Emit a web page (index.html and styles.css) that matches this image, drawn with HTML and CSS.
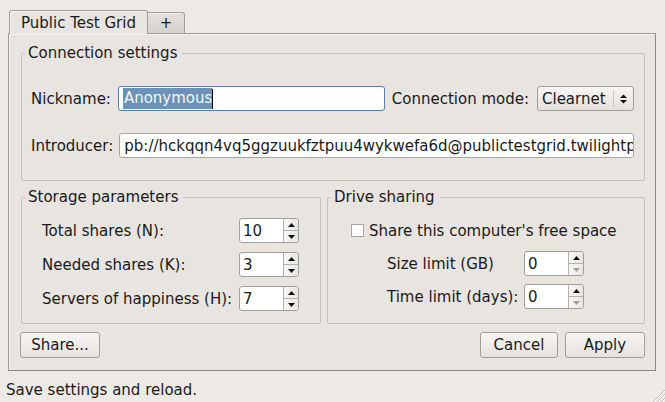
FILE: index.html
```html
<!DOCTYPE html>
<html>
<head>
<meta charset="utf-8">
<link rel="stylesheet" href="styles.css">
</head>
<body>
<div class="window">
  <div class="tabs">
    <div class="tab active">Public Test Grid</div>
    <div class="tab plus">+</div>
  </div>
  <div class="pane">
    <fieldset class="group conn">
      <legend>Connection settings</legend>
      <div class="row">
        <span class="lbl">Nickname:</span>
        <div class="input nick"><span class="sel">Anonymous</span><span class="caret"></span></div>
        <span class="lbl">Connection mode:</span>
        <div class="combo">
          <span class="combo-text">Clearnet</span>
          <span class="combo-btn"><svg width="9" height="12" viewBox="0 0 9 12"><polygon points="1,5 8,5 4.5,1.5" fill="#111"/><polygon points="1,7 8,7 4.5,10.5" fill="#111"/></svg></span>
        </div>
      </div>
      <div class="row">
        <span class="lbl">Introducer:</span>
        <div class="input intro"><span class="intro-text">pb://hckqqn4vq5ggzuukfztpuu4wykwefa6d@publictestgrid.twilightparadox.com:50213/introducer</span></div>
      </div>
    </fieldset>
    <div class="groups">
      <fieldset class="group storage">
        <legend>Storage parameters</legend>
        <div class="storage-grid">
          <span class="lbl">Total shares (N):</span>
          <div class="spin"><span class="spin-val">10</span><span class="spin-btns"><span><svg width="7" height="4" viewBox="0 0 7 4"><polygon points="0,4 7,4 3.5,0" fill="#111"/></svg></span><span><svg width="7" height="4" viewBox="0 0 7 4"><polygon points="0,0 7,0 3.5,4" fill="#111"/></svg></span></span></div>
          <span class="lbl">Needed shares (K):</span>
          <div class="spin"><span class="spin-val">3</span><span class="spin-btns"><span><svg width="7" height="4" viewBox="0 0 7 4"><polygon points="0,4 7,4 3.5,0" fill="#111"/></svg></span><span><svg width="7" height="4" viewBox="0 0 7 4"><polygon points="0,0 7,0 3.5,4" fill="#111"/></svg></span></span></div>
          <span class="lbl">Servers of happiness (H):</span>
          <div class="spin"><span class="spin-val">7</span><span class="spin-btns"><span><svg width="7" height="4" viewBox="0 0 7 4"><polygon points="0,4 7,4 3.5,0" fill="#111"/></svg></span><span><svg width="7" height="4" viewBox="0 0 7 4"><polygon points="0,0 7,0 3.5,4" fill="#111"/></svg></span></span></div>
        </div>
      </fieldset>
      <fieldset class="group drive">
        <legend>Drive sharing</legend>
        <div class="check-row"><span class="checkbox"></span><span class="lbl">Share this computer's free space</span></div>
        <div class="limits">
          <span class="lbl">Size limit (GB)</span>
          <div class="spin"><span class="spin-val">0</span><span class="spin-btns"><span><svg width="7" height="4" viewBox="0 0 7 4"><polygon points="0,4 7,4 3.5,0" fill="#111"/></svg></span><span><svg width="7" height="4" viewBox="0 0 7 4"><polygon points="0,0 7,0 3.5,4" fill="#a09c97"/></svg></span></span></div>
          <span class="lbl">Time limit (days):</span>
          <div class="spin"><span class="spin-val">0</span><span class="spin-btns"><span><svg width="7" height="4" viewBox="0 0 7 4"><polygon points="0,4 7,4 3.5,0" fill="#111"/></svg></span><span><svg width="7" height="4" viewBox="0 0 7 4"><polygon points="0,0 7,0 3.5,4" fill="#a09c97"/></svg></span></span></div>
        </div>
      </fieldset>
    </div>
    <div class="buttons">
      <div class="btn share">Share...</div>
      <div class="spacer"></div>
      <div class="btn cancel">Cancel</div>
      <div class="btn apply">Apply</div>
    </div>
  </div>
  <div class="status">
    <span class="status-text">Save settings and reload.</span>
    <svg class="grip" width="14" height="14" viewBox="0 0 14 14"><g stroke="#c2beb9" stroke-width="1"><line x1="14" y1="2" x2="2" y2="14"/><line x1="14" y1="6" x2="6" y2="14"/><line x1="14" y1="10" x2="10" y2="14"/></g><g stroke="#ffffff" stroke-width="1"><line x1="14" y1="3" x2="3" y2="14"/><line x1="14" y1="7" x2="7" y2="14"/><line x1="14" y1="11" x2="11" y2="14"/></g></svg>
  </div>
</div>
</body>
</html>
```
FILE: styles.css
```css
* { box-sizing: border-box; }
html, body { margin: 0; padding: 0; }
body {
  width: 665px;
  height: 402px;
  overflow: hidden;
  background: #edeae6;
  font-family: "DejaVu Sans", sans-serif;
  font-size: 15px;
  color: #1a1a1a;
}
.window {
  display: flex;
  flex-direction: column;
  height: 402px;
  padding: 10px 9px 0 8px;
}
.tabs {
  display: flex;
  align-items: flex-end;
  height: 23px;
  padding-left: 1px;
}
.tab {
  display: flex;
  align-items: center;
  justify-content: center;
  border: 1px solid #a29e99;
  border-bottom: none;
  border-radius: 3px 3px 0 0;
  white-space: nowrap;
}
.tab.active {
  width: 139px;
  height: 24px;
  margin-bottom: -1px;
  background: #e8e4e0;
  position: relative;
  z-index: 1;
  box-shadow: inset 1px 1px 0 #f7f5f2;
  padding-top: 1px;
}
.tab.plus {
  width: 37px;
  height: 21px;
  border-left: none;
  border-radius: 0 3px 0 0;
  background: linear-gradient(#e3dfda, #d5d1cc);
  box-shadow: inset 0 1px 0 #f1eeea;
}
.pane {
  height: 338px;
  border: 1px solid #a09c97;
  border-right-color: #8d8984;
  border-bottom-color: #8d8984;
  background: #e8e4e0;
  padding: 11px 10px 12px 12px;
  display: flex;
  flex-direction: column;
  box-shadow: inset 1px 1px 0 #f4f2ef;
}
fieldset.group {
  margin: 0;
  min-width: 0;
  border: 1px solid #c4c0bb;
  border-radius: 2px;
}
legend {
  padding: 0 5px 0 3px;
  margin-left: -6px;
  line-height: 16px;
}
.storage legend { margin-left: -17px; }
.drive legend { margin-left: -20px; }
.conn {
  padding: 25px 10px 22px 9px;
}
.row {
  display: flex;
  align-items: center;
  gap: 7px;
}
.row + .row { margin-top: 22px; }
.lbl { white-space: nowrap; }
.input {
  height: 25px;
  background: #fff;
  border: 1px solid #aaa6a1;
  border-radius: 3px;
  display: flex;
  align-items: center;
  padding: 0 4px;
  white-space: nowrap;
  overflow: hidden;
}
.nick {
  flex: 1;
  border-color: #5d7fa5;
  padding-left: 4px;
}
.sel {
  background: #6e91b6;
  color: #f4f7fa;
  line-height: 21px;
  padding: 0 0 0 1px;
}
.caret {
  width: 1px;
  height: 20px;
  background: #000;
}
.intro {
  flex: 1;
  margin-left: -1px;
}
.intro-text { flex: none; }
.combo {
  width: 97px;
  height: 25px;
  margin-left: 1px;
  border: 1px solid #a29e99;
  border-radius: 3px;
  background: linear-gradient(#f7f5f3, #e5e1dc);
  display: flex;
  align-items: center;
}
.combo-text { flex: 1; padding-left: 4px; }
.combo-btn {
  width: 20px;
  height: 17px;
  border-left: 1px solid #cbc7c2;
  display: flex;
  align-items: center;
  justify-content: center;
}
.groups {
  display: flex;
  gap: 6px;
  margin-top: 8px;
}
.storage {
  width: 300px;
  padding: 13px 21px 12px 20px;
}
.storage-grid {
  display: grid;
  grid-template-columns: 1fr 60px;
  row-gap: 9px;
  align-items: center;
}
.drive {
  flex: 1;
  padding: 13px 10px 12px 23px;
}
.check-row {
  display: flex;
  align-items: center;
  gap: 5px;
  height: 25px;
}
.checkbox {
  width: 13px;
  height: 13px;
  border: 1px solid #a8a49f;
  background: #fff;
}
.limits {
  display: grid;
  grid-template-columns: 131px 60px;
  column-gap: 6px;
  row-gap: 8px;
  margin-left: 36px;
  margin-top: 8px;
  align-items: center;
}
.spin {
  width: 60px;
  height: 25px;
  border: 1px solid #a29e99;
  border-radius: 3px;
  background: #fff;
  display: flex;
  overflow: hidden;
}
.spin-val {
  flex: 1;
  padding-left: 3px;
  display: flex;
  align-items: center;
}
.spin-btns {
  width: 15px;
  border-left: 1px solid #b5b1ac;
  display: flex;
  flex-direction: column;
  background: linear-gradient(to right, #f8f7f5, #e9e6e2);
}
.spin-btns span {
  flex: 1;
  display: flex;
  align-items: center;
  justify-content: center;
}
.spin-btns span + span { border-top: 1px solid #b5b1ac; }
.buttons {
  display: flex;
  gap: 7px;
  margin-top: 8px;
}
.btn {
  height: 26px;
  border: 1px solid #a09c97;
  border-radius: 3px;
  background: linear-gradient(#f7f5f3, #e6e2dd);
  display: flex;
  align-items: center;
  justify-content: center;
}
.share { width: 80px; margin-left: -1px; }
.spacer { flex: 1; }
.cancel { width: 78px; }
.apply { width: 80px; }
.status {
  flex: 1;
  display: flex;
  align-items: center;
  margin: 0 -9px 0 -8px;
  padding: 7px 0 0 6px;
}
.status-text { flex: 1; }
.grip { align-self: flex-end; }
```
